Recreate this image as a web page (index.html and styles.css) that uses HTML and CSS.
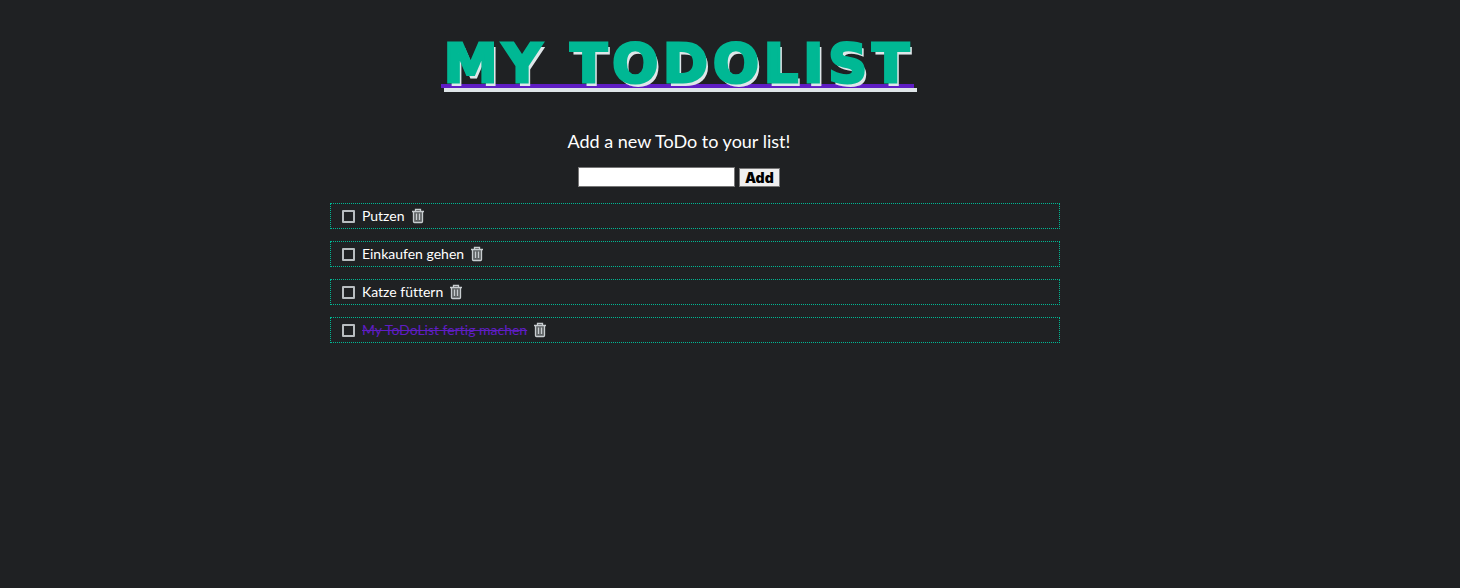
FILE: index.html
```html
<!DOCTYPE html>
<html lang="en">
<head>
<meta charset="utf-8">
<title>My ToDoList</title>
<link rel="stylesheet" href="styles.css">
</head>
<body>
<svg class="sprite" aria-hidden="true">
  <symbol id="trash" viewBox="0 0 14 16">
    <path d="M2.5 3.5H11.5V14H2.5Z" fill="#5d6163"/>
    <path d="M1 3.5H13M4.5 3V1.5H9.5V3M2.5 4V13.5Q2.5 14.5 3.5 14.5H10.5Q11.5 14.5 11.5 13.5V4M5.5 5.5V12M8.5 5.5V12" fill="none" stroke="currentColor" stroke-width="1.3"/>
  </symbol>
</svg>
<header class="intro">
  <h1 class="title">MY TODOLIST</h1>
  <form class="add-form">
    <label class="prompt" for="new-todo">Add a new ToDo to your list!</label>
    <div class="controls">
      <input class="entry" id="new-todo" type="text">
      <button class="add" type="button">Add</button>
    </div>
  </form>
</header>
<ul class="todos">
  <li class="todo">
    <input class="check" type="checkbox" id="t1"><label class="name" for="t1">Putzen</label>
    <button class="delete" type="button" aria-label="Delete"><svg class="icon"><use href="#trash"/></svg></button>
  </li>
  <li class="todo">
    <input class="check" type="checkbox" id="t2"><label class="name" for="t2">Einkaufen gehen</label>
    <button class="delete" type="button" aria-label="Delete"><svg class="icon"><use href="#trash"/></svg></button>
  </li>
  <li class="todo">
    <input class="check" type="checkbox" id="t3"><label class="name" for="t3">Katze füttern</label>
    <button class="delete" type="button" aria-label="Delete"><svg class="icon"><use href="#trash"/></svg></button>
  </li>
  <li class="todo">
    <input class="check" type="checkbox" id="t4"><label class="name done" for="t4">My ToDoList fertig machen</label>
    <button class="delete" type="button" aria-label="Delete"><svg class="icon"><use href="#trash"/></svg></button>
  </li>
</ul>
</body>
</html>
```

FILE: styles.css
```css
* { box-sizing: border-box; }
body {
  margin: 0;
  background: #1f2123;
  color: #fff;
  font-family: Lato, sans-serif;
  font-variant-ligatures: none;
}
.sprite { display: none; }
.intro {
  display: flex;
  flex-direction: column;
  align-items: center;
  width: 93%;
  padding-top: 28px;
  text-align: center;
}
.title {
  margin: 0;
  padding: 0 3px 0 3px;
  color: #00b894;
  background:
    linear-gradient(#5f1dc4, #5f1dc4) 0 56px / 100% 4px no-repeat,
    linear-gradient(#dfe6e9, #dfe6e9) 0 60px / 100% 4px no-repeat;
  background-position: 0 56px, 3px 60px;
  background-size: calc(100% - 3px) 4px, 100% 4px;
  font: 700 54px/72px "DejaVu Sans", sans-serif;
  letter-spacing: 5px;
  -webkit-text-stroke: 3px #00b894;
  text-shadow: 3px 4px #dfe6e9;
}
.prompt {
  display: block;
  margin-top: 29px;
  font-size: 18px;
  line-height: 24px;
}
.controls {
  display: flex;
  justify-content: center;
  align-items: center;
  gap: 4px;
  margin-top: 14px;
}
.entry {
  width: 157px;
  height: 20px;
  padding: 1px 2px;
  border: 1px solid #767676;
  background: #fff;
}
.add {
  width: 41px;
  height: 19px;
  padding: 0;
  border: 1px solid #767676;
  background: #efefef;
  color: #000;
  font: 900 14px/15px Inter, sans-serif;
}
.todos {
  display: grid;
  gap: 12px;
  width: 50%;
  margin: 16px 0 0 22.6%;
  padding: 0;
  list-style: none;
}
.todo {
  display: flex;
  align-items: center;
  height: 26px;
  padding-left: 11px;
  border: 1px dotted #00b894;
}
.check {
  appearance: none;
  width: 13px;
  height: 13px;
  margin: 0 7px 0 0;
  border: 2px solid #b8bdc0;
  border-radius: 1px;
}
.name {
  font-size: 14px;
  line-height: 20px;
}
.done {
  color: #5f1dc4;
  text-decoration: line-through;
}
.delete {
  display: flex;
  margin-left: 6px;
  padding: 0;
  border: 0;
  background: none;
  color: #c8cdd0;
}
.icon { width: 14px; height: 16px; }
```
